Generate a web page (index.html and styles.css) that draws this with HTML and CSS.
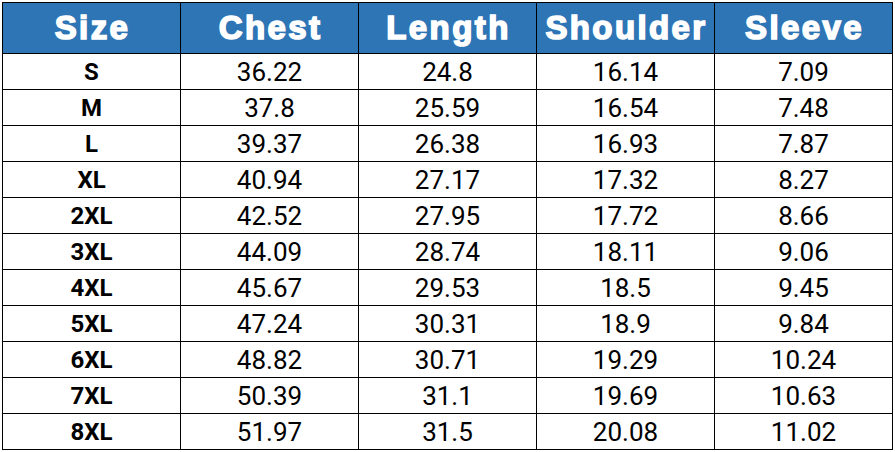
FILE: index.html
```html
<!DOCTYPE html>
<html>
<head>
<meta charset="utf-8">
<link rel="stylesheet" href="styles.css">
</head>
<body>
<div class="wrap">
<table class="chart">
  <thead>
    <tr><th>Size</th><th>Chest</th><th>Length</th><th>Shoulder</th><th>Sleeve</th></tr>
  </thead>
  <tbody>
    <tr><td class="sz">S</td><td>36.22</td><td>24.8</td><td>16.14</td><td>7.09</td></tr>
    <tr><td class="sz">M</td><td>37.8</td><td>25.59</td><td>16.54</td><td>7.48</td></tr>
    <tr><td class="sz">L</td><td>39.37</td><td>26.38</td><td>16.93</td><td>7.87</td></tr>
    <tr><td class="sz">XL</td><td>40.94</td><td>27.17</td><td>17.32</td><td>8.27</td></tr>
    <tr><td class="sz">2XL</td><td>42.52</td><td>27.95</td><td>17.72</td><td>8.66</td></tr>
    <tr><td class="sz">3XL</td><td>44.09</td><td>28.74</td><td>18.11</td><td>9.06</td></tr>
    <tr><td class="sz">4XL</td><td>45.67</td><td>29.53</td><td>18.5</td><td>9.45</td></tr>
    <tr><td class="sz">5XL</td><td>47.24</td><td>30.31</td><td>18.9</td><td>9.84</td></tr>
    <tr><td class="sz">6XL</td><td>48.82</td><td>30.71</td><td>19.29</td><td>10.24</td></tr>
    <tr><td class="sz">7XL</td><td>50.39</td><td>31.1</td><td>19.69</td><td>10.63</td></tr>
    <tr><td class="sz">8XL</td><td>51.97</td><td>31.5</td><td>20.08</td><td>11.02</td></tr>
  </tbody>
</table>
</div>
</body>
</html>
```
FILE: styles.css
```css
html, body {
  margin: 0;
  padding: 0;
  background: #ffffff;
}
.wrap {
  padding: 2px 0 0 2px;
}
.chart {
  border-collapse: collapse;
  table-layout: fixed;
  width: 891px;
}
.chart th, .chart td {
  border: 1.5px solid #000;
  text-align: center;
  padding: 0;
}
.chart th {
  background: #2e75b6;
  color: #ffffff;
  height: 50px;
  padding-left: 2px;
  font-family: "Liberation Sans", Arial, sans-serif;
  font-weight: 700;
  font-size: 33px;
  letter-spacing: 2.4px;
  white-space: nowrap;
  -webkit-text-stroke: 1.6px #ffffff;
}
.chart td {
  height: 35px;
  font-family: Roboto, "Liberation Sans", sans-serif;
  font-size: 26px;
  color: #000;
  font-weight: 400;
}
.chart td.sz {
  font-weight: 700;
  font-size: 24px;
}
```
